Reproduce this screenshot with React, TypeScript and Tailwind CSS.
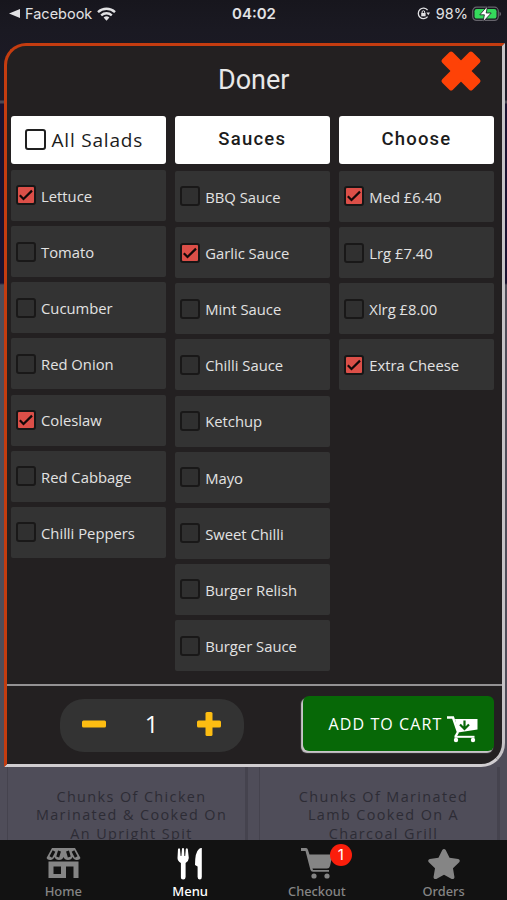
import { FaStar } from 'react-icons/fa';

type Option = { label: string; checked?: boolean };

const salads: Option[] = [
  { label: 'Lettuce', checked: true },
  { label: 'Tomato' },
  { label: 'Cucumber' },
  { label: 'Red Onion' },
  { label: 'Coleslaw', checked: true },
  { label: 'Red Cabbage' },
  { label: 'Chilli Peppers' },
];

const sauces: Option[] = [
  { label: 'BBQ Sauce' },
  { label: 'Garlic Sauce', checked: true },
  { label: 'Mint Sauce' },
  { label: 'Chilli Sauce' },
  { label: 'Ketchup' },
  { label: 'Mayo' },
  { label: 'Sweet Chilli' },
  { label: 'Burger Relish' },
  { label: 'Burger Sauce' },
];

const sizes: Option[] = [
  { label: 'Med £6.40', checked: true },
  { label: 'Lrg £7.40' },
  { label: 'Xlrg £8.00' },
  { label: 'Extra Cheese', checked: true },
];

function Checkbox({ checked }: { checked?: boolean }) {
  return (
    <span
      className={
        checked
          ? 'flex size-5 shrink-0 items-center justify-center rounded-[3px] border-2 border-[#171616] bg-[#dc4f48]'
          : 'flex size-5 shrink-0 items-center justify-center rounded-[3px] border-2 border-[#191818] bg-[#303030]'
      }
    >
      {checked && (
        <svg viewBox="0 0 16 16" className="size-4" fill="none" stroke="#120808" strokeWidth="2.2">
          <path d="M1.800 8.200 5.500 12 14 3.600" />
        </svg>
      )}
    </span>
  );
}

function OptionList({ options }: { options: Option[] }) {
  return (
    <div className="flex flex-col gap-[5.15px]">
      {options.map((option) => (
        <div
          key={option.label}
          className="flex h-[51px] items-center gap-[5.5px] rounded-[2px] bg-[#333333] pl-[5px] font-['Open_Sans'] text-[14.8px] text-[#e2e2e2]"
        >
          <Checkbox checked={option.checked} />
          <span className="pt-[1px] whitespace-nowrap">{option.label}</span>
        </div>
      ))}
    </div>
  );
}

function StatusBar() {
  return (
    <div className="grid h-7 grid-cols-3 items-center pl-[9px] pr-[5px] font-['Inter'] text-[15px] text-[#e2e2e4]">
      <div className="flex items-center">
        <svg width="11" height="9" viewBox="0 0 11 9" fill="currentColor">
          <path d="M0 4.5 11 0v9z" />
        </svg>
        <span className="ml-[5px] text-[14.5px]">Facebook</span>
        <svg className="ml-[5px]" width="19" height="14" viewBox="0 0 19 14" fill="none" stroke="currentColor" strokeWidth="2.4">
          <path d="M1 5.1a12.4 12.4 0 0 1 17 0M4.2 8.3a7.9 7.9 0 0 1 10.6 0" />
          <path d="M6.6 10.6a4.3 4.3 0 0 1 5.8 0L9.5 13.7z" fill="currentColor" stroke="none" />
        </svg>
      </div>
      <div className="pr-[3px] text-center font-semibold">04:02</div>
      <div className="flex items-center justify-end">
        <svg width="13" height="13" viewBox="0 0 13 13" fill="none" stroke="currentColor">
          <path d="M10.6 3.2A5.2 5.2 0 1 0 10.6 9.6" strokeWidth="1.3" />
          <path d="M9.4 5.4h3.6l-1.7 2.8z" fill="currentColor" stroke="none" />
          <path d="M4.2 6h4.4v3.3H4.2z" fill="currentColor" stroke="none" />
          <path d="M5.1 6.2V5a1.3 1.3 0 0 1 2.6 0v1.2" />
        </svg>
        <span className="ml-[6px] text-[14.5px]">98%</span>
        <svg className="ml-[4px]" width="30" height="16" viewBox="0 0 30 16">
          <rect x=".7" y="1.2" width="25.6" height="13.2" rx="3.8" fill="none" stroke="#66646c" strokeWidth="1.2" />
          <rect x="2.5" y="3" width="22" height="9.6" rx="2.2" fill="#35d95c" />
          <path d="M27.5 5.8c2 .7 2 3.7 0 4.4z" fill="#66646c" />
          <path d="M15.5 0 7.8 8.8h4.6L11 16l8.2-9h-5z" fill="#fff" stroke="#1a1922" strokeWidth=".8" />
        </svg>
      </div>
    </div>
  );
}

function ColumnHeader({ title }: { title: string }) {
  return (
    <div className="flex h-12 items-center justify-center rounded-[3px] bg-white font-['Roboto'] text-[18.5px] font-medium tracking-[1.2px] text-[#1c1c1c]">
      {title}
    </div>
  );
}

function ProductModal() {
  return (
    <div className="relative mx-1 mt-[15.5px] mr-[2.5px] flex h-[724px] flex-col rounded-tl-[22px] rounded-br-[24px] border-[3px] border-t-[#c43c10] border-r-[#c6c3c6] border-b-[#d0cdd0] border-l-[#c43c10] bg-[#232021]">
      <div className="flex h-[69.5px] shrink-0 items-center justify-center pr-[1px] font-['Roboto'] text-[27px] text-[#e8e8e8]">
        <h1 className="pb-[2px]">Doner</h1>
      </div>
      <button className="absolute top-[4px] right-[20px]" aria-label="Close">
        <svg width="42" height="42" viewBox="0 0 42 42" fill="#fe4207">
          <rect x="-.5" y="13.5" width="43" height="15" rx="2.5" transform="rotate(45 21 21)" />
          <rect x="-.5" y="13.5" width="43" height="15" rx="2.5" transform="rotate(-45 21 21)" />
        </svg>
      </button>
      <div className="grid grow grid-cols-3 gap-[9px] pr-[7.5px] pl-[3.5px]">
        <div className="flex flex-col gap-[6px]">
          <div className="flex h-12 items-center rounded-[3px] bg-white pl-[14px]">
            <span className="size-[21px] rounded-[3px] border-2 border-[#202020]" />
            <span className="ml-[6px] font-['Open_Sans'] text-[19px] font-medium tracking-[.8px] whitespace-nowrap text-[#1c1c1c]">All Salads</span>
          </div>
          <OptionList options={salads} />
        </div>
        <div className="flex flex-col gap-[7px]">
          <ColumnHeader title="Sauces" />
          <OptionList options={sauces} />
        </div>
        <div className="flex flex-col gap-[7px]">
          <ColumnHeader title="Choose" />
          <OptionList options={sizes} />
        </div>
      </div>
      <div className="flex h-[80px] shrink-0 items-start justify-between border-t-2 border-[#949294] pt-[10px] pr-[8px] pl-[53px]">
        <div className="mt-[3px] flex h-[53px] w-[184px] items-center justify-between rounded-[24px] bg-[#333333] pr-[23px] pl-[22px] pb-[3px]">
          <svg width="24" height="24" viewBox="0 0 24 24" fill="#fdbd12">
            <rect y="8.5" width="24" height="7" rx="1.5" />
          </svg>
          <span className="font-['Open_Sans'] text-[24px] text-white">1</span>
          <svg width="24" height="24" viewBox="0 0 24 24" fill="#fdbd12">
            <rect y="8.5" width="24" height="7" rx="1.5" />
            <rect x="8.5" width="7" height="24" rx="1.5" />
          </svg>
        </div>
        <button className="flex h-[55px] w-[191px] items-center rounded-[6px] bg-[#076807] pl-[26px] font-['Open_Sans'] text-[16px] font-medium tracking-[1.1px] text-white shadow-[-1.5px_2px_1px_#c9c6c9]">
          <span className="whitespace-nowrap">ADD TO CART</span>
          <svg className="mt-[11px] ml-[5px] shrink-0" width="32" height="27" viewBox="0 0 32 27" fill="none">
            <path d="M0 1.5h6L11 16M8.5 20.5 11 16" stroke="#fff" strokeWidth="2.4" />
            <path d="M8 3h22.500v10.500L11 16.500z" fill="#fff" />
            <path d="M17.5 4.5v8m-4.500-4 4.500 4.500L22 8.500" stroke="#076807" strokeWidth="2.2" />
            <path d="M7.5 20.800h20" stroke="#fff" strokeWidth="2" />
            <circle cx="9" cy="24" r="2.2" fill="#fff" />
            <circle cx="26" cy="24" r="2.2" fill="#fff" />
          </svg>
        </button>
      </div>
    </div>
  );
}

function BottomNav() {
  return (
    <nav className="grid h-[60px] shrink-0 grid-cols-4 bg-[#121212] font-['Noto_Sans'] text-[13px] font-medium text-[#858585]">
      <div className="flex flex-col items-center pt-[8px]">
        <svg width="35" height="30" viewBox="0 0 35 30" fill="currentColor">
          <path d="M6 0h23l5.5 10q-1 2.500-4.500 2-2.500-.5-3.500-3-1 3-4.500 3-3.500 0-4.500-3-1 3-4.500 3-3.500 0-4.500-3-1 2.500-3.500 3-3.500.5-4.500-2z" />
          <path d="M8 3 4.800 9M13.500 3l-1.800 6M21.500 3l1.800 6M27 3l3.200 6" stroke="#121212" strokeWidth="3" />
          <path fillRule="evenodd" d="M2.500 13.500h30V30h-5V18.500H20V30H2.500zM7.500 18.500v7.500H15v-7.500z" />
        </svg>
        <span className="mt-[3px] leading-5">Home</span>
      </div>
      <div className="flex flex-col items-center pt-[7px] text-white">
        <svg width="26" height="34" viewBox="0 0 26 34" fill="currentColor">
          <path d="M1 2q1.200-1.500 2 0l.6 7h.8L5 1.500q1-1 2 0l.4 7.500h.8L8.800 2q1-1.500 2 0l1 9q0 3-3.200 5v14q0 2.500-2.400 2.500T3.900 30V16Q.5 14 .5 11z" />
          <path d="M24.800 1v29q0 2.500-2 2.500T20.600 30V19.500L18 18q0-13 4-16 1.500-1.500 2.800-1z" />
        </svg>
        <span className="leading-5">Menu</span>
      </div>
      <div className="flex flex-col items-center pt-[8px]">
        <div className="relative">
          <svg width="32" height="31" viewBox="0 0 32 31" fill="currentColor">
            <path d="M0 0h5q1.500 0 2 2l1.500 4.500h23L29 18q-.6 2.500-3 2.500H11.500L12 22h16v1.800H12q-2 0-2.600-2L4.500 3H0z" />
            <circle cx="13" cy="28" r="2.6" />
            <circle cx="26" cy="28" r="2.6" />
          </svg>
          <span className="absolute top-[-4px] left-[29px] flex size-[22px] items-center justify-center rounded-full bg-[#fb1e0b] font-['Inter'] text-[15px] font-normal text-white">
            1
          </span>
        </div>
        <span className="mt-[2px] text-[12.8px] leading-5">Checkout</span>
      </div>
      <div className="flex flex-col items-center pt-[7px]">
        <FaStar className="size-[34px]" />
        <span className="text-[12.8px] leading-5">Orders</span>
      </div>
    </nav>
  );
}

export default function App() {
  return (
    <div className="flex h-[900px] w-[507px] flex-col overflow-hidden bg-[linear-gradient(#17161d_0px,#1a1922_30px,#1e1b29_100px,#4b4853_101px,#4b4853_103px,#1a1230_104px,#1a1230_283px,#4f4d59_285px)]">
      <StatusBar />
      <ProductModal />
      <div className="flex grow justify-between overflow-hidden pr-[7px] pl-[7px]">
        <div className="h-[73px] w-[241px] border-r-[3px] border-l border-[#45434e] pt-[21px] pl-[10px] text-center font-['Open_Sans'] text-[14.4px] leading-[18.300px] font-medium tracking-[1.4px] text-[#2d2c35]">
          Chunks Of Chicken<br />Marinated &amp; Cooked On<br />An Upright Spit
        </div>
        <div className="h-[73px] w-[241px] border-r-[3px] border-l border-[#45434e] pt-[21px] pl-[10px] text-center font-['Open_Sans'] text-[14.4px] leading-[18.300px] font-medium tracking-[1.4px] text-[#2d2c35]">
          Chunks Of Marinated<br />Lamb Cooked On A<br />Charcoal Grill
        </div>
      </div>
      <BottomNav />
    </div>
  );
}
